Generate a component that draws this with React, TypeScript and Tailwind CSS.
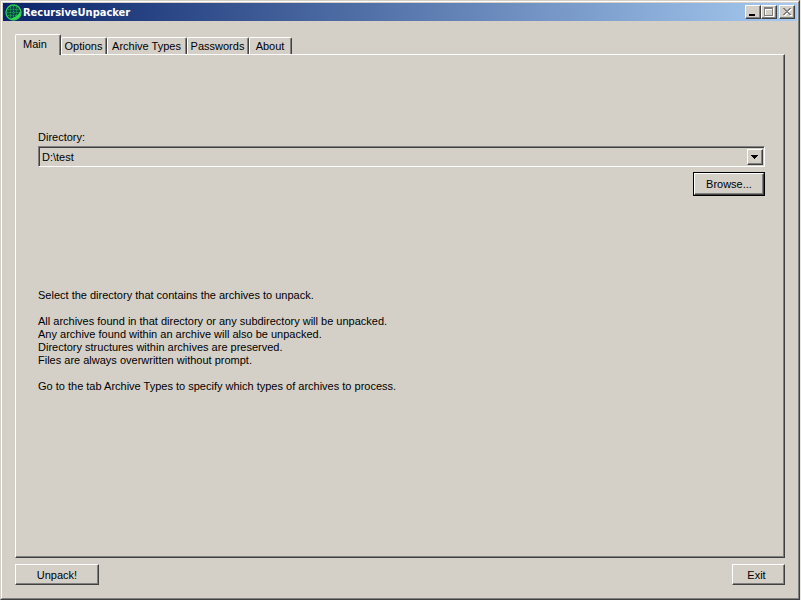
import React, { useState } from "react";

const raised =
  "border border-t-white border-l-white border-r-[#404040] border-b-[#404040] shadow-[inset_-1px_-1px_0_#808080]";

const tabs = [
  { name: "Options", width: "w-[46px]" },
  { name: "Archive Types", width: "w-20" },
  { name: "Passwords", width: "w-[62px]" },
  { name: "About", width: "w-[43px]" },
];

function AppIcon() {
  return (
    <svg viewBox="0 0 17 17" className="size-[17px] shrink-0" aria-hidden="true">
      <circle cx="8.5" cy="8.5" r="7.5" fill="#084a48" stroke="#2ccf50" strokeWidth="1.3" />
      <path d="M3 5.5h11M2 8.5h13M3 11.5h11M5.5 3v11M8.5 2v13M11.5 3v11" stroke="#1fa350" strokeWidth="0.9" strokeDasharray="1.5 0.8" />
      <path d="M15.5 7.5a7 7 0 0 1-10 7.2q6-1 10-7.2" fill="#2fe04a" />
    </svg>
  );
}

function CaptionButton({ label, children }: { label: string; children: React.ReactNode }) {
  return (
    <button type="button" aria-label={label} className={`flex h-[14px] w-4 items-center justify-center bg-[#d4d0c8] ${raised}`}>
      <svg viewBox="0 0 12 10" className="h-[10px] w-3 shrink-0" shapeRendering="crispEdges" aria-hidden="true">
        {children}
      </svg>
    </button>
  );
}

function TitleBar() {
  return (
    <header className="flex h-[18px] items-center bg-linear-to-r/srgb from-[#0a246a] to-[#a6caf0] px-[2px]">
      <AppIcon />
      <h1 className="ml-[1px] flex-1 pt-px font-['DejaVu_Sans_Condensed','DejaVu_Sans',sans-serif] text-[11px] leading-[17px] font-bold text-white">
        RecursiveUnpacker
      </h1>
      <div className="flex">
        <CaptionButton label="Minimize">
          <path d="M2 7h6v2H2z" fill="#000" />
        </CaptionButton>
        <CaptionButton label="Maximize">
          <path d="M2 1h9v9H2zM3 3v6h7V3z" fill="#fff" fillRule="evenodd" />
          <path d="M1 0h9v9H1zM2 2v6h7V2z" fill="#808080" fillRule="evenodd" />
        </CaptionButton>
        <div className="w-[2px]" />
        <CaptionButton label="Close">
          <path d="M3 2h2v1h1v1h2V3h1V2h2v1h-1v1H9v1H8v1h1v1h1v1h1v1H9V8H8V7H6v1H5v1H3V8h1V7h1V6h1V5H5V4H4V3H3z" fill="#fff" />
          <path d="M2 1h2v1h1v1h2V2h1V1h2v1H9v1H8v1H7v1h1v1h1v1h1v1H8V7H7V6H5v1H4v1H2V7h1V6h1V5h1V4H4V3H3V2H2z" fill="#808080" />
        </CaptionButton>
      </div>
    </header>
  );
}

export default function App() {
  const [active, setActive] = useState("Main");
  return (
    <div className="min-h-screen bg-[#e8e6e1] pr-px">
      <div className="flex min-h-screen flex-col border border-[#d4d0c8] border-r-[#404040] border-b-[#404040] bg-[#d4d0c8] font-['Liberation_Sans',Arial,sans-serif] text-[11px] leading-[13px] text-black">
        <div className="flex flex-1 flex-col border border-t-white border-r-[#808080] border-b-[#808080] border-l-white p-[1px]">
          <TitleBar />
          <main className="flex flex-1 flex-col px-3 pt-[13px] pb-3">
            <div role="tablist" className="flex items-end">
              <button
                type="button"
                role="tab"
                aria-selected={active === "Main"}
                onClick={() => setActive("Main")}
                className="z-10 -mb-px h-[21px] w-[46px] rounded-t-[2px] border border-b-0 border-t-white border-r-[#404040] border-l-white bg-[#d4d0c8] pr-[6px] pb-[2px] shadow-[inset_-1px_0_0_#808080]"
              >
                Main
              </button>
              {tabs.map((tab) => (
                <button
                  key={tab.name}
                  type="button"
                  role="tab"
                  aria-selected={active === tab.name}
                  onClick={() => setActive(tab.name)}
                  className={`h-[17px] rounded-t-[2px] border border-b-0 border-t-white border-r-[#404040] border-l-white pr-px whitespace-nowrap shadow-[inset_-1px_0_0_#808080] ${tab.width}`}
                >
                  {tab.name}
                </button>
              ))}
            </div>
            <section role="tabpanel" className={`flex-1 pt-[76px] pr-[19px] pl-[22px] ${raised}`}>
              <label htmlFor="directory" className="block">
                Directory:
              </label>
              <div className="relative mt-[2px] h-[21px] border border-t-[#808080] border-r-white border-b-white border-l-[#808080] shadow-[inset_1px_1px_0_#404040]">
                <select id="directory" className="block h-full w-full appearance-none bg-transparent pt-[2px] pl-[3px] text-[11px] outline-none">
                  <option>D:\test</option>
                </select>
                <span className={`pointer-events-none absolute top-[2px] right-[1px] flex h-4 w-4 items-center justify-center bg-[#d4d0c8] pr-px ${raised}`}>
                  <svg viewBox="0 0 7 4" className="h-1 w-[7px] shrink-0" shapeRendering="crispEdges" aria-hidden="true">
                    <path d="M0 0h7v1H6v1H5v1H4v1H3V3H2V2H1V1H0z" />
                  </svg>
                </span>
              </div>
              <div className="mt-[5px] flex justify-end">
                <div className="border border-black">
                  <button type="button" className={`block h-[22px] w-[70px] ${raised}`}>
                    Browse...
                  </button>
                </div>
              </div>
              <div className="mt-[93px] space-y-[13px]">
                <p>Select the directory that contains the archives to unpack.</p>
                <p>
                  All archives found in that directory or any subdirectory will be unpacked.
                  <br />
                  Any archive found within an archive will also be unpacked.
                  <br />
                  Directory structures within archives are preserved.
                  <br />
                  Files are always overwritten without prompt.
                </p>
                <p>Go to the tab Archive Types to specify which types of archives to process.</p>
              </div>
            </section>
            <footer className="mt-[6px] flex justify-between">
              <button type="button" className={`h-[21px] w-[84px] pt-px ${raised}`}>
                Unpack!
              </button>
              <button type="button" className={`h-[21px] w-[53px] pt-px pr-1 ${raised}`}>
                Exit
              </button>
            </footer>
          </main>
        </div>
      </div>
    </div>
  );
}
